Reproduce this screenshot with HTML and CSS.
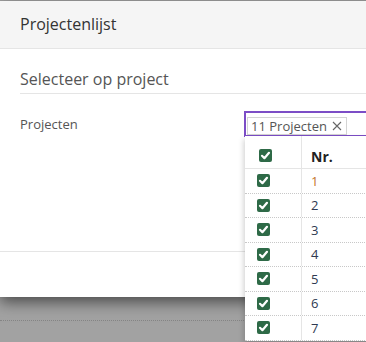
FILE: index.html
```html
<!DOCTYPE html>
<html lang="nl">
<head>
    <meta charset="UTF-8">
    <title>Projectenlijst</title>
    <link rel="stylesheet" href="styles.css">
</head>
<body>
    <div class="modal">
        <div class="modal-header">Projectenlijst</div>
        <div class="modal-body">
            <h2 class="section-title">Selecteer op project</h2>
            <div class="form-row">
                <label class="form-label">Projecten</label>
                <div class="select">
                    <span class="tag">11 Projecten
                        <svg class="tag-x" width="10" height="10" viewBox="0 0 10 10"><path d="M1 1 L9 9 M9 1 L1 9" stroke="#666" stroke-width="1.1" fill="none"/></svg>
                    </span>
                    <div class="dropdown">
                        <div class="list-row list-head">
                            <div class="col-check"><span class="check"></span></div>
                            <div class="col-nr">Nr.</div>
                        </div>
                        <div class="list-row"><div class="col-check"><span class="check"></span></div><div class="col-nr active">1</div></div>
                        <div class="list-row"><div class="col-check"><span class="check"></span></div><div class="col-nr">2</div></div>
                        <div class="list-row"><div class="col-check"><span class="check"></span></div><div class="col-nr">3</div></div>
                        <div class="list-row"><div class="col-check"><span class="check"></span></div><div class="col-nr">4</div></div>
                        <div class="list-row"><div class="col-check"><span class="check"></span></div><div class="col-nr">5</div></div>
                        <div class="list-row"><div class="col-check"><span class="check"></span></div><div class="col-nr">6</div></div>
                        <div class="list-row"><div class="col-check"><span class="check"></span></div><div class="col-nr">7</div></div>
                    </div>
                </div>
            </div>
        </div>
        <div class="modal-footer"></div>
    </div>
    <div class="backdrop-row"></div>
</body>
</html>
```

FILE: styles.css
```css
html, body {
    margin: 0;
    height: 100%;
    overflow: hidden;
}
body {
    background: #a2a2a2;
    font-family: "Open Sans", "DejaVu Sans", sans-serif;
    color: #555;
}
.modal {
    margin-top: 1px;
    width: 420px;
    background: #fff;
    box-shadow: 0 5px 14px rgba(0, 0, 0, 0.55);
    position: relative;
    z-index: 1;
}
.modal-header {
    height: 47px;
    line-height: 47px;
    padding-left: 20px;
    font-size: 16px;
    color: #333;
    background: #f5f5f5;
    border-bottom: 1px solid #e5e5e5;
}
.modal-body {
    padding: 18px 0 114px 20px;
}
.section-title {
    margin: 0;
    font-size: 16px;
    font-weight: normal;
    line-height: 24px;
    padding-bottom: 2px;
    color: #555;
    border-bottom: 1px solid #e5e5e5;
}
.form-row {
    display: flex;
    align-items: center;
    margin-top: 17px;
}
.form-label {
    width: 224px;
    font-size: 13px;
    color: #555;
}
.select {
    position: relative;
    flex: 1;
    height: 20px;
    border: 2px solid #7c4dc6;
    border-right: none;
    padding: 1px;
}
.tag {
    display: inline-flex;
    align-items: center;
    gap: 5px;
    height: 16px;
    padding: 0 4px 0 3px;
    border: 1px solid #d4d4d4;
    font-size: 13px;
    color: #555;
}
.dropdown {
    position: absolute;
    top: 23px;
    left: -1px;
    width: 180px;
    background: #fff;
    box-shadow: -1px 3px 6px rgba(0, 0, 0, 0.2);
    font-size: 13px;
}
.list-row {
    display: flex;
    align-items: center;
    height: 23.5px;
    border-bottom: 1px dotted #c8c8c8;
}
.list-row.list-head {
    height: 32px;
    border-bottom: 1px solid #e5e5e5;
}
.col-check {
    width: 44px;
    height: 100%;
    padding-left: 12px;
    display: flex;
    align-items: center;
    border-right: 1px solid #e5e5e5;
}
.list-head .col-check {
    width: 42px;
    padding-left: 14px;
    padding-top: 6px;
    height: calc(100% - 6px);
}
.col-nr {
    padding-left: 9px;
    color: #2f3a52;
}
.list-head .col-nr {
    font-size: 14px;
    font-weight: bold;
    color: #222;
    padding-top: 8px;
}
.col-nr.active {
    color: #c4762c;
}
.check {
    display: block;
    width: 13px;
    height: 13px;
    border-radius: 2px;
    background: #2e6a47 url("data:image/svg+xml;utf8,<svg xmlns='http://www.w3.org/2000/svg' viewBox='0 0 13 13'><path d='M3 6.8 L5.4 9.2 L10 3.8' fill='none' stroke='white' stroke-width='2.2' stroke-linecap='round' stroke-linejoin='round'/></svg>") no-repeat center;
}
.modal-footer {
    height: 45px;
    border-top: 1px solid #e5e5e5;
}
.backdrop-row {
    height: 23px;
    border-bottom: 1px dotted #858585;
}
```
